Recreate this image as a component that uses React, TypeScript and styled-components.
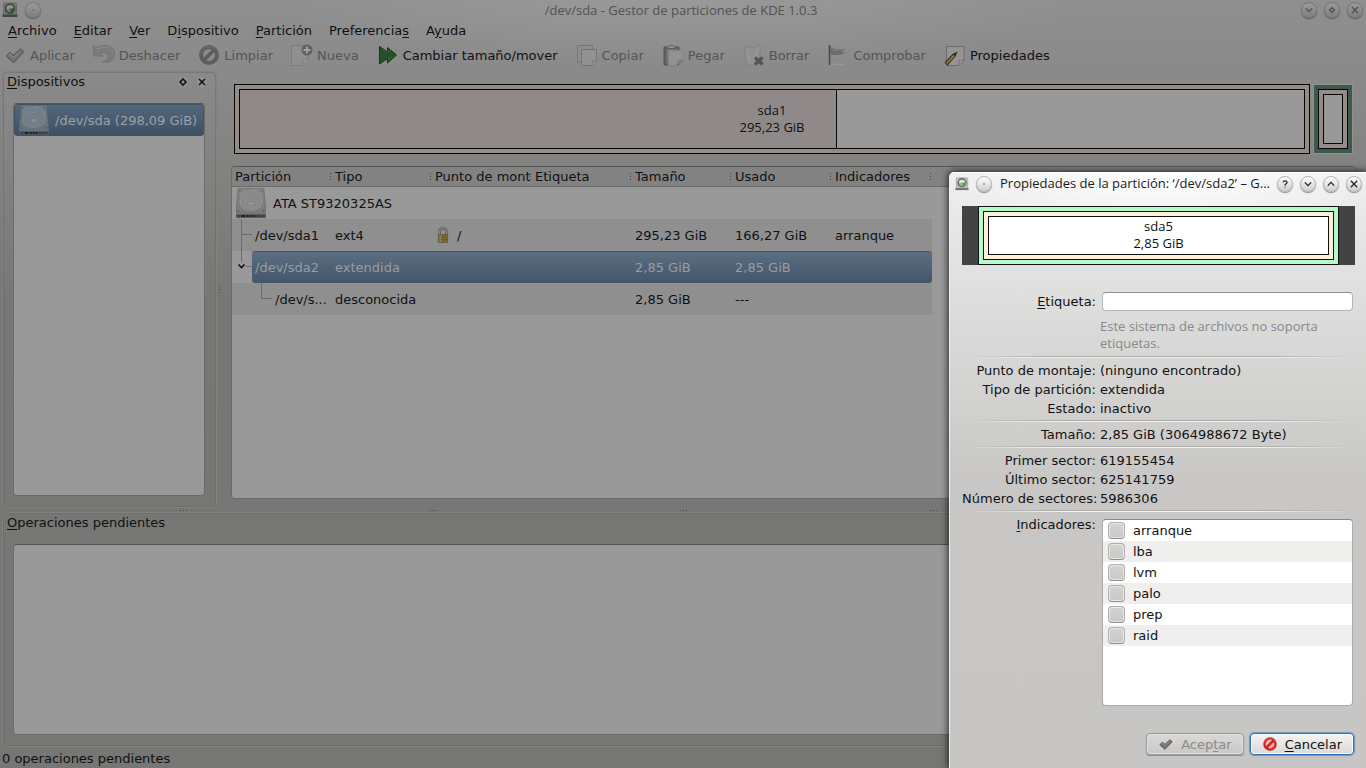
import React from "react";
import styled, { createGlobalStyle, css } from "styled-components";

const GlobalStyle = createGlobalStyle`
  * { box-sizing: border-box; }
  html, body { margin: 0; padding: 0; }
  body {
    font-family: "DejaVu Sans", sans-serif;
    font-size: 13px;
    line-height: 19px;
    color: #111;
    overflow: hidden;
  }
  button, input { font: inherit; color: inherit; }
  u { text-decoration: underline; text-underline-offset: 2px; text-decoration-thickness: 1px; }
`;

const Window = styled.div`
  position: relative;
  display: flex;
  flex-direction: column;
  min-height: 100vh;
  background:
    radial-gradient(ellipse 420px 64px at 50% 0, rgba(160, 160, 160, 0.6), transparent),
    linear-gradient(#8f8f8f 0, #8a8a8a 70px, #838382 160px, #777775 300px, #767674 100%);
`;

const TitleBar = styled.header<{ $dialog?: boolean }>`
  display: flex;
  align-items: center;
  gap: 7px;
  height: ${(p) => (p.$dialog ? 21 : 20)}px;
  padding: ${(p) => (p.$dialog ? "0 4px 0 5px" : "0 3px 0 2px")};
  flex: none;
`;

const Title = styled.h1<{ $dialog?: boolean }>`
  flex: 1;
  margin: 0;
  padding-left: ${(p) => (p.$dialog ? 1 : 20)}px;
  font: 400 13px/19px "Open Sans", sans-serif;
  text-align: ${(p) => (p.$dialog ? "left" : "center")};
  color: ${(p) => (p.$dialog ? "#1a1a1a" : "#525252")};
  white-space: nowrap;
`;

const RoundButton = styled.button<{ $dialog?: boolean }>`
  display: grid;
  place-items: center;
  flex: none;
  width: 16px;
  height: 16px;
  padding: 0;
  border: 1px solid ${(p) => (p.$dialog ? "#b5b5b5" : "#777")};
  border-radius: 50%;
  background: ${(p) =>
    p.$dialog ? "linear-gradient(#fdfdfd, #cfcfcf)" : "linear-gradient(#9a9a9a, #808080)"};
  box-shadow: 0 1px 1px ${(p) => (p.$dialog ? "#888" : "#555")};
  color: ${(p) => (p.$dialog ? "#222" : "#505050")};
  svg { width: 8px; height: 8px; }
`;

const MenuBar = styled.nav`
  display: flex;
  gap: 17px;
  height: 20px;
  padding: 0 8px;
  flex: none;
`;

const MenuItem = styled.button`
  padding: 0;
  border: 0;
  background: none;
  line-height: 19px;
`;

const ToolBar = styled.div`
  display: flex;
  gap: 18px;
  height: 31px;
  padding: 0 4px 1px;
  flex: none;
`;

const ToolButton = styled.button`
  display: flex;
  align-items: center;
  gap: 4px;
  padding: 0;
  border: 0;
  background: none;
  white-space: nowrap;
  color: #111;
  &:disabled { color: #545454; }
`;

const Workspace = styled.main`
  display: flex;
  flex: 1;
  min-height: 0;
`;

const dockFrame = css`
  border: 1px solid #828280;
  border-radius: 5px;
  box-shadow: inset 0 0 0 1px rgba(100, 100, 98, 0.45);
`;

const Dock = styled.section`
  ${dockFrame}
  display: flex;
  flex-direction: column;
  width: 215px;
  margin-left: 2px;
  padding: 0 11px 11px 10px;
  flex: none;
`;

const DockHeader = styled.div`
  display: flex;
  align-items: center;
  gap: 9px;
  height: 19px;
  margin: 0 -2px 12px -6px;
`;

const DockTitle = styled.h2`
  flex: 1;
  margin: 0;
  font-size: 13px;
  font-weight: 400;
`;

const DockButton = styled.button`
  display: grid;
  place-items: center;
  width: 10px;
  height: 10px;
  padding: 0;
  border: 0;
  border-radius: 50%;
  background: #949494;
`;

const sunken = css`
  border: 1px solid #6b6b6a;
  border-top-color: #555554;
  border-radius: 4px;
  background: #999;
`;

const DeviceList = styled.ul`
  ${sunken}
  flex: 1;
  margin: 0;
  padding: 0;
  list-style: none;
`;

const DeviceItem = styled.li`
  display: flex;
  align-items: center;
  gap: 6px;
  height: 32px;
  padding-left: 4px;
  border: 1px solid #3f5266;
  border-radius: 3px;
  background: linear-gradient(#52677c, #3f5064);
  color: #9ba1a8;
  white-space: nowrap;
`;

const Dots = styled.div<{ $vertical?: boolean }>`
  flex: none;
  width: ${(p) => (p.$vertical ? 1 : 7)}px;
  height: ${(p) => (p.$vertical ? 7 : 1)}px;
  background: repeating-linear-gradient(
    ${(p) => (p.$vertical ? "180deg" : "90deg")},
    #484847 0 1px,
    transparent 1px 3px
  );
`;

const VerticalSplitter = styled.div`
  display: flex;
  align-items: center;
  justify-content: center;
  width: 4px;
`;

const HorizontalSplitter = styled.div`
  display: flex;
  align-items: center;
  gap: 243px;
  height: 4px;
  padding-left: 180px;
  overflow: hidden;
  flex: none;
`;

const Content = styled.div`
  display: flex;
  flex-direction: column;
  gap: 12px;
  flex: 1;
  min-width: 0;
  padding: 13px 10px 9px;
`;

const DeviceBar = styled.div`
  display: flex;
  gap: 3px;
  height: 70px;
  margin: 0 3px;
`;

const PartitionFrame = styled.div`
  flex: 1;
  padding: 4px;
  border: 1px solid #050505;
  background: #938c87;
`;

const PartitionFill = styled.div<{ $used?: number }>`
  display: grid;
  place-content: center;
  height: 100%;
  border: 1px solid #050505;
  background: ${(p) =>
    p.$used
      ? `linear-gradient(90deg, #8f8a89 ${p.$used}%, #050505 ${p.$used}%, #050505 calc(${p.$used}% + 1px), #999 calc(${p.$used}% + 1px))`
      : "#999"};
  font: 13px/17px "Open Sans", sans-serif;
  text-align: center;
`;

const ExtendedFrame = styled.div`
  width: 40px;
  padding: 4px;
  border: 1px solid #8f9291;
  background: #3f584f;
  > div { height: 100%; }
`;

const TreeView = styled.div`
  ${sunken}
  flex: 1;
  overflow: hidden;
`;

const TreeTable = styled.table`
  width: 100%;
  table-layout: fixed;
  border-collapse: separate;
  border-spacing: 0;
  th, td {
    padding: 0 0 0 3px;
    font-weight: 400;
    text-align: left;
    white-space: nowrap;
    overflow: hidden;
  }
  col { width: 100px; }
  col:last-child { width: auto; }
`;

const HeadCell = styled.th`
  height: 20px;
  background: #828282;
  border-bottom: 1px solid #6a6a6a;
  > div {
    display: flex;
    justify-content: space-between;
    align-items: center;
    padding-right: 1px;
  }
  span { min-width: 0; overflow: hidden; }
`;

const Row = styled.tr<{ $alt?: boolean; $selected?: boolean }>`
  td {
    height: 32px;
    background: ${(p) => (p.$alt ? "#8f8f8f" : "#999")};
  }
  td.rest { background: #999; }
  ${(p) =>
    p.$selected &&
    css`
      color: #989da3;
      td:not(:first-child):not(.rest) {
        background: linear-gradient(#5c6e80, #43566a);
        border-top: 1px solid #3f546b;
      }
      td:nth-child(7) { border-radius: 0 3px 3px 0; }
    `}
  td:first-child { padding: 0; }
`;

const TreeCell = styled.div<{ $selected?: boolean }>`
  display: flex;
  align-items: center;
  height: 32px;
  svg { flex: none; }
  span {
    flex: 1;
    height: 32px;
    padding-left: 3px;
    line-height: 33px;
    overflow: hidden;
    ${(p) =>
      p.$selected &&
      css`
        line-height: 31px;
        background: linear-gradient(#5c6e80, #43566a);
        border-top: 1px solid #3f546b;
        border-radius: 3px 0 0 3px;
      `}
  }
`;

const DiskCell = styled.div`
  display: flex;
  align-items: center;
  gap: 7px;
  height: 32px;
  padding-left: 4px;
`;

const MountCell = styled.div`
  display: flex;
  align-items: center;
  gap: 6px;
`;

const Operations = styled.section`
  ${dockFrame}
  display: flex;
  flex-direction: column;
  height: 235px;
  margin: 0 2px;
  padding: 0 10px 11px;
  flex: none;
  h2 { margin-left: -6px; flex: none; }
`;

const OperationsList = styled.div`
  ${sunken}
  flex: 1;
  margin-top: 12px;
`;

const StatusBar = styled.footer`
  height: 21px;
  padding: 2px 2px 0;
  flex: none;
`;

/* The properties window floats over the main window. */
const Dialog = styled.section`
  position: absolute;
  top: 172px;
  right: 0;
  bottom: 0;
  display: flex;
  flex-direction: column;
  width: 417px;
  border-left: 1px solid #eee;
  border-top: 1px solid #fff;
  border-radius: 5px 0 0 0;
  background:
    radial-gradient(ellipse 230px 64px at 50% 0, #fff, rgba(255, 255, 255, 0)),
    linear-gradient(#efefef 0, #e6e6e6 60px, #c8c7c5 310px, #c7c6c4 100%);
  box-shadow: 0 0 7px 1px rgba(0, 0, 0, 0.75);
`;

const DialogBody = styled.form`
  display: flex;
  flex-direction: column;
  flex: 1;
  padding: 12px 11px 13px 12px;
`;

const Preview = styled.div`
  height: 59px;
  margin-bottom: 27px;
  padding: 0 16px;
  background: #434343;
`;

const PreviewFrame = styled.div<{ $color: string }>`
  height: 100%;
  padding: 4px;
  border: 1px solid #111;
  background: ${(p) => p.$color};
`;

const PreviewFill = styled.div`
  display: grid;
  place-content: center;
  height: 100%;
  padding-bottom: 1px;
  border: 1px solid #111;
  background: #fff;
  font: 13px/17px "Open Sans", sans-serif;
  text-align: center;
`;

const Fields = styled.div`
  display: grid;
  grid-template-columns: 134px 1fr;
  column-gap: 4px;
`;

const FieldLabel = styled.label`
  text-align: right;
  white-space: nowrap;
`;

const TextBox = styled.input`
  height: 19px;
  margin: 0 2px;
  padding: 0 4px;
  border: 1px solid #b7b6b4;
  border-top-color: #8f8f8e;
  border-radius: 4px;
  background: #fff;
  min-width: 0;
  outline: none;
`;

const Hint = styled.p`
  grid-column: 2;
  margin: 7px 0 2px;
  font: 13px/17px "Open Sans", sans-serif;
  color: #888;
`;

const Separator = styled.hr`
  grid-column: 1 / -1;
  width: 100%;
  height: 2px;
  margin: 2px 0 3px;
  border: 0;
  background:
    linear-gradient(90deg, transparent, #aaa9a7 25%, #aaa9a7 75%, transparent) 0 0 / 100% 1px no-repeat,
    linear-gradient(90deg, transparent, #f4f4f3 25%, #f4f4f3 75%, transparent) 0 1px / 100% 1px no-repeat;
`;

const FlagList = styled.ul`
  height: 187px;
  margin: 4px 2px 0;
  padding: 0;
  border: 1px solid #acaba9;
  border-top-color: #888;
  border-radius: 4px;
  background: #fff;
  list-style: none;
  overflow: hidden;
`;

const Flag = styled.li`
  height: 21px;
  &:nth-child(even) { background: #efefee; }
  label {
    display: flex;
    align-items: center;
    gap: 8px;
    height: 21px;
    padding-left: 5px;
  }
`;

const CheckBox = styled.input`
  appearance: none;
  width: 17px;
  height: 17px;
  margin: 0;
  border: 1px solid #b0afad;
  border-bottom-color: #8c8c8c;
  border-radius: 4px;
  background: linear-gradient(#d5d4d2, #c8c7c5);
  box-shadow: inset 0 0 0 1px #e8e8e7;
`;

const Actions = styled.div`
  display: flex;
  justify-content: flex-end;
  gap: 6px;
  margin: auto 1px 0 0;
`;

const ActionButton = styled.button<{ $focused?: boolean }>`
  display: flex;
  align-items: center;
  gap: 7px;
  height: 22px;
  padding: 0 11px;
  border: 1px solid ${(p) => (p.$focused ? "#2f6fb5" : "#999")};
  border-radius: 4px;
  background: linear-gradient(#f3f3f2, #dad9d7);
  box-shadow: ${(p) =>
    p.$focused ? "0 0 1px 1px #6d9acb, inset 0 0 0 1px #fff" : "inset 0 0 0 1px #e2e2e1, 0 1px 1px #8b8b8a"};
  &:disabled {
    background: linear-gradient(#dad9d7, #c9c8c6);
    color: #8a8a89;
  }
`;

const Glyph = ({ kind }: { kind: string }) => {
  const d: Record<string, string> = {
    down: "M1 3L5 7L9 3",
    up: "M1 7L5 3L9 7",
    close: "M1 1L9 9M9 1L1 9",
    diamond: "M5 2L8 5L5 8L2 5Z",
    help: "M2.500 3C3 0.500 7.500 0.500 7.500 3C7.500 5 5 4.500 5 7M5 8.300V9.500",
    dot: "M4.500 5H5.500",
  };
  return (
    <svg width="10" height="10" viewBox="0 0 10 10" fill="none" stroke="currentColor" strokeWidth="1.6">
      <path d={d[kind]} />
    </svg>
  );
};

const AppIcon = ({ dim }: { dim?: boolean }) => (
  <svg width="16" height="16" viewBox="0 0 16 16">
    <rect x="1.500" y="1" width="13" height="12" rx="1" fill={dim ? "#777" : "#c4c4c4"} stroke={dim ? "#606060" : "#999"} strokeWidth=".7" />
    <path d="M0.500 12.500H15.500V15H0.500Z" fill={dim ? "#454545" : "#777"} />
    <circle cx="8" cy="6.500" r="4.500" fill={dim ? "#7b7b7b" : "#b0b0b0"} stroke={dim ? "#404040" : "#6a6a6a"} strokeWidth="1.500" />
    <path d="M4.500 5Q8 2 11.500 5L10.500 7Q8 5.500 5.500 7Z" fill={dim ? "#959595" : "#e4e4e4"} />
    <path d="M7.500 7.500L12.500 5.500Q13.500 9 10 11Z" fill={dim ? "#275f2d" : "#35bf3c"} />
  </svg>
);

const DiskIcon = ({ blue }: { blue?: boolean }) => (
  <svg width="30" height="30" viewBox="0 0 30 30">
    <defs>
      <linearGradient id={blue ? "diskB" : "diskG"} x1="0" y1="0" x2="0" y2="1">
        <stop offset="0" stopColor={blue ? "#6b7781" : "#838383"} />
        <stop offset="1" stopColor={blue ? "#66717b" : "#767676"} />
      </linearGradient>
    </defs>
    <path d="M2 1Q2 0 3 0H27Q28 0 28 1L30 25V29Q30 30 29 30H1Q0 30 0 29V25Z" fill={`url(#${blue ? "diskB" : "diskG"})`} stroke={blue ? "#515c66" : "#646464"} strokeWidth=".6" />
    <path d="M0.500 26.500H29.500V29.500H0.500Z" fill={blue ? "#3c4650" : "#444"} />
    <path d="M6 28H9M11 28H12.500M14 28H15.500M17 28H18.500" stroke="#1e1e1e" strokeWidth="2" />
    <path d="M17 1.500C26 3 27 10 26 16C24 24 6 25 4 16C3 11 8 10 13 8C16 6 14 2 17 1.500Z" fill={blue ? "#727e88" : "#8a8a8a"} stroke={blue ? "#87929b" : "#9c9c9c"} strokeWidth=".7" />
    <path d="M4 12V3Q4 2 5 2H15Q14 6 11 8Q6 9 4 12Z" fill={blue ? "#75808a" : "#8b8b8b"} />
    <ellipse cx="15" cy="15.500" rx="9" ry="6.500" fill="none" stroke={blue ? "#6d7882" : "#848484"} strokeWidth=".7" />
    <ellipse cx="15" cy="15.500" rx="3.400" ry="2" fill={blue ? "#85909a" : "#969696"} stroke={blue ? "#66717b" : "#7a7a7a"} strokeWidth=".7" />
    <circle cx="4" cy="3" r=".7" fill="#555" /><circle cx="26" cy="3" r=".7" fill="#555" />
    <circle cx="2.500" cy="23" r=".7" fill="#4a4a4a" /><circle cx="27.500" cy="23" r=".7" fill="#4a4a4a" />
  </svg>
);

const LockIcon = () => (
  <svg width="16" height="16" viewBox="0 0 16 16">
    <path d="M4.500 8V4.500Q4.500 1.500 8 1.500T11.500 4.500V8" fill="none" stroke="#555" strokeWidth="2.400" />
    <path d="M4.500 8V4.500Q4.500 1.500 8 1.500T11.500 4.500V8" fill="none" stroke="#8d8d8d" strokeWidth="1.200" />
    <rect x="3.300" y="7.500" width="9.400" height="8" rx=".6" fill="#77672f" stroke="#5d5228" strokeWidth=".6" />
    <path d="M5.500 8V15" stroke="#948550" strokeWidth="2" />
    <path d="M3.500 10H12.500M3.500 12.500H12.500" stroke="#665923" strokeWidth=".5" />
  </svg>
);

const Check = ({ size }: { size: number }) => (
  <svg width={size} height={size} viewBox="0 0 22 22">
    <path d="M2.500 12L6 8.500L9.500 11.500L16.500 5L19.500 8L9.500 18.500Z" fill="#747474" stroke="#606060" strokeWidth="1.300" strokeLinejoin="round" />
    <path d="M4.500 11.500L6 10L9.500 13.500L16.500 7" fill="none" stroke="#8f8f8f" strokeWidth="1" />
  </svg>
);

const tools: { label: string; enabled?: boolean; icon: React.ReactNode }[] = [
  { label: "Aplicar", icon: <Check size={22} /> },
  {
    label: "Deshacer",
    icon: (
      <>
        <path d="M.5 1.500L3.500 3.500Q9 .5 14 1.500Q21.500 3.500 21.500 10.500Q21 16.500 16 18H9.500Q15.500 16 15.500 12.500Q15 9 11 8.500Q9 8.500 7.500 9.500L10.500 12H.5Z" fill="#7b7b7b" stroke="#6f6f6f" strokeWidth=".8" />
        <path d="M1.500 3L4 5Q9 2 14 3Q19.500 4.500 20 10" fill="none" stroke="#8e8e8e" />
      </>
    ),
  },
  {
    label: "Limpiar",
    icon: (
      <>
        <circle cx="11" cy="11" r="8" fill="none" stroke="#5d5d5d" strokeWidth="4" />
        <path d="M5.500 16.500L16.500 5.500" stroke="#5d5d5d" strokeWidth="3.600" />
        <path d="M3 10Q3.500 3.500 11 3Q15 3 17 5" fill="none" stroke="#707070" strokeWidth="1" />
      </>
    ),
  },
  {
    label: "Nueva",
    icon: (
      <>
        <path d="M.5 1.500H17.500V14L11 21.500H.5Z" fill="#8f8f8f" stroke="#777" strokeWidth=".8" />
        <path d="M11 21.500Q13 19 12 15.500Q15 16.500 17.500 14" fill="#9b9b9b" stroke="#777" strokeWidth=".8" />
        <circle cx="16" cy="6" r="5.500" fill="#616161" />
        <path d="M16 2.500V9.500M12.500 6H19.500" stroke="#a0a0a0" strokeWidth="2" />
      </>
    ),
  },
  {
    label: "Cambiar tamaño/mover",
    enabled: true,
    icon: (
      <>
        <path d="M2.500 2.500L10.500 8V3.500L19.500 11L10.500 19V14.500L2.500 20Z" fill="#24502a" stroke="#18351b" strokeWidth="1" strokeLinejoin="round" />
        <path d="M3.500 4.500L11 10V5.500L17 10.500Z" fill="#35543a" />
        <path d="M11.500 13.500V16.500L17 12Z" fill="#27702f" />
      </>
    ),
  },
  {
    label: "Copiar",
    icon: (
      <>
        <path d="M1.500 1.500H16.500V18H1.500Z" fill="#8e8e8e" stroke="#707070" strokeWidth=".8" />
        <path d="M5.500 5.500H20.500V17L16 21.500H5.500Z" fill="#929292" stroke="#707070" strokeWidth=".9" />
        <path d="M16 21.500Q17 19.500 16 17Q18.500 18 20.500 17" fill="#9b9b9b" stroke="#707070" strokeWidth=".8" />
      </>
    ),
  },
  {
    label: "Pegar",
    icon: (
      <>
        <path d="M2 3H17V21H2Z" fill="#626262" stroke="#565656" />
        <path d="M4.500 4H15V19H4.500Z" fill="#777" />
        <path d="M5 4.500Q6 1.500 9.500 1.500T14 4.500Z" fill="#929292" stroke="#555" strokeWidth=".8" />
        <path d="M6.500 6.500H21V16.500L16 21.500H6.500Z" fill="#929292" stroke="#828282" strokeWidth=".7" />
        <path d="M15.500 21Q17 19 16 17Q18.500 17.500 20.500 16.500Z" fill="#a0a0a0" stroke="#555" strokeWidth=".7" />
      </>
    ),
  },
  {
    label: "Borrar",
    icon: (
      <>
        <path d="M1.500 3Q5 1 7 3.500Q11 5 13.500 1.500Q18 1 17.500 5L16 20Q9 22.500 3.500 20Q1 12 1.500 3Z" fill="#919191" stroke="#7c7c7c" strokeWidth=".8" />
        <path d="M5 7L6.500 18M14 6L12.500 15" stroke="#9a9a9a" />
        <path d="M12 13.500L19.500 20.500M19.500 13.500L12 20.500" stroke="#555" strokeWidth="3.500" />
      </>
    ),
  },
  {
    label: "Comprobar",
    icon: (
      <>
        <path d="M3.500 21Q12 17.500 19 21Z" fill="#989898" />
        <path d="M3.500 3Q9 6.500 19 5L14.500 7.500L18.500 9Q12 12 3.500 10.500Z" fill="#6c6c6c" />
        <path d="M4 4Q9 6.500 17 5.500L7 7.500Z" fill="#7e7e7e" />
        <path d="M2.500 1V21" stroke="#484848" strokeWidth="1.500" />
      </>
    ),
  },
  {
    label: "Propiedades",
    enabled: true,
    icon: (
      <>
        <path d="M2.500 2.500H20V16L15 21.500H2.500Z" fill="#949494" stroke="#666" strokeWidth=".9" />
        <path d="M14.500 21.500Q16 19 14.500 16.500Q18 17.500 20 15.500" fill="#a0a0a0" stroke="#6c6c6c" strokeWidth=".8" />
        <path d="M.5 18.500L3.500 21.500L11.500 12.500L13.500 7.500L8.500 10Z" fill="#2e2a20" />
        <path d="M2.500 19.500L10 11.500" stroke="#8f7a42" strokeWidth="2" />
      </>
    ),
  },
];

const CancelIcon = () => (
  <svg width="16" height="16" viewBox="0 0 16 16">
    <circle cx="8" cy="8" r="5.600" fill="#f4b5b0" stroke="#cc2722" strokeWidth="2.400" />
    <path d="M4 12L12 4" stroke="#cc2722" strokeWidth="2.600" />
    <path d="M2 6Q4 1.500 8 1.500T14 6" fill="none" stroke="#ea7068" strokeWidth=".8" />
  </svg>
);

const Branch = ({ kind }: { kind: "tee" | "open" | "leaf" }) => (
  <svg width={kind === "leaf" ? 40 : 20} height="32" fill="none" stroke="#6b6b6b">
    {kind === "tee" && <path d="M9.500 0V32M9.500 15.500H20" />}
    {kind === "open" && (
      <>
        <path d="M9.500 0V11M14 15.500H20" />
        <path d="M6.500 13.500L9.500 16.500L12.500 13.500" stroke="#111" strokeWidth="1.600" />
      </>
    )}
    {kind === "leaf" && <path d="M29.500 0V15.500H40" />}
  </svg>
);

const menus: [string, string, string][] = [
  ["", "A", "rchivo"],
  ["", "E", "ditar"],
  ["", "V", "er"],
  ["D", "i", "spositivo"],
  ["", "P", "artición"],
  ["Preferencia", "s", ""],
  ["A", "y", "uda"],
];

const columns = ["Partición", "Tipo", "Punto de mont", "Etiqueta", "Tamaño", "Usado", "Indicadores"];

const firstFields = [
  ["Punto de montaje:", "(ninguno encontrado)"],
  ["Tipo de partición:", "extendida"],
  ["Estado:", "inactivo"],
];
const sectorFields = [
  ["Primer sector:", "619155454"],
  ["Último sector:", "625141759"],
  ["Número de sectores:", "5986306"],
];

const FieldRows = ({ rows }: { rows: string[][] }) => (
  <>
    {rows.map(([name, value]) => (
      <React.Fragment key={name}>
        <FieldLabel as="span">{name}</FieldLabel>
        <span>{value}</span>
      </React.Fragment>
    ))}
  </>
);

export default function App() {
  return (
    <Window>
      <GlobalStyle />
      <TitleBar>
        <AppIcon dim />
        <RoundButton aria-label="Menú"><Glyph kind="dot" /></RoundButton>
        <Title>/dev/sda - Gestor de particiones de KDE 1.0.3</Title>
        <RoundButton aria-label="Minimizar"><Glyph kind="down" /></RoundButton>
        <RoundButton aria-label="Maximizar"><Glyph kind="diamond" /></RoundButton>
        <RoundButton aria-label="Cerrar"><Glyph kind="close" /></RoundButton>
      </TitleBar>
      <MenuBar>
        {menus.map(([before, key, after]) => (
          <MenuItem key={before + key + after}>{before}<u>{key}</u>{after}</MenuItem>
        ))}
      </MenuBar>
      <ToolBar>
        {tools.map((t) => (
          <ToolButton key={t.label} disabled={!t.enabled}>
            <svg width="22" height="22" viewBox="0 0 22 22" fill="none">{t.icon}</svg>
            {t.label}
          </ToolButton>
        ))}
      </ToolBar>
      <Workspace>
        <Dock>
          <DockHeader>
            <DockTitle><u>D</u>ispositivos</DockTitle>
            <DockButton aria-label="Desacoplar"><Glyph kind="diamond" /></DockButton>
            <DockButton aria-label="Cerrar panel">
              <svg width="10" height="10" stroke="#111" strokeWidth="1.500"><path d="M2 2L8 8M8 2L2 8" /></svg>
            </DockButton>
          </DockHeader>
          <DeviceList>
            <DeviceItem><DiskIcon blue />/dev/sda (298,09 GiB)</DeviceItem>
          </DeviceList>
        </Dock>
        <VerticalSplitter><Dots $vertical /></VerticalSplitter>
        <Content>
          <DeviceBar>
            <PartitionFrame>
              <PartitionFill $used={56}>
                <div>sda1</div>
                <div>295,23 GiB</div>
              </PartitionFill>
            </PartitionFrame>
            <ExtendedFrame>
              <PartitionFrame><PartitionFill /></PartitionFrame>
            </ExtendedFrame>
          </DeviceBar>
          <TreeView>
            <TreeTable>
              <colgroup>
                {columns.map((c) => <col key={c} />)}
                <col />
              </colgroup>
              <thead>
                <tr>
                  {columns.map((c) => (
                    <HeadCell key={c}>
                      <div><span>{c}</span><Dots $vertical /></div>
                    </HeadCell>
                  ))}
                  <HeadCell />
                </tr>
              </thead>
              <tbody>
                <Row>
                  <td colSpan={7}><DiskCell><DiskIcon />ATA ST9320325AS</DiskCell></td>
                  <td className="rest" />
                </Row>
                <Row $alt>
                  <td><TreeCell><Branch kind="tee" /><span>/dev/sda1</span></TreeCell></td>
                  <td>ext4</td>
                  <td><MountCell><LockIcon />/</MountCell></td>
                  <td />
                  <td>295,23 GiB</td>
                  <td>166,27 GiB</td>
                  <td>arranque</td>
                  <td className="rest" />
                </Row>
                <Row $selected>
                  <td><TreeCell $selected><Branch kind="open" /><span>/dev/sda2</span></TreeCell></td>
                  <td>extendida</td>
                  <td />
                  <td />
                  <td>2,85 GiB</td>
                  <td>2,85 GiB</td>
                  <td />
                  <td className="rest" />
                </Row>
                <Row $alt>
                  <td><TreeCell><Branch kind="leaf" /><span>/dev/s...</span></TreeCell></td>
                  <td>desconocida</td>
                  <td />
                  <td />
                  <td>2,85 GiB</td>
                  <td>---</td>
                  <td />
                  <td className="rest" />
                </Row>
              </tbody>
            </TreeTable>
          </TreeView>
        </Content>
      </Workspace>
      <HorizontalSplitter>
        <Dots /><Dots /><Dots /><Dots /><Dots />
      </HorizontalSplitter>
      <Operations>
        <DockTitle><u>O</u>peraciones pendientes</DockTitle>
        <OperationsList />
      </Operations>
      <StatusBar>0 operaciones pendientes</StatusBar>

      <Dialog role="dialog" aria-label="Propiedades de la partición">
        <TitleBar $dialog>
          <AppIcon />
          <RoundButton $dialog aria-label="Menú"><Glyph kind="dot" /></RoundButton>
          <Title $dialog>Propiedades de la partición: ‘/dev/sda2’ – G...</Title>
          <RoundButton $dialog aria-label="Ayuda"><Glyph kind="help" /></RoundButton>
          <RoundButton $dialog aria-label="Minimizar"><Glyph kind="down" /></RoundButton>
          <RoundButton $dialog aria-label="Maximizar"><Glyph kind="up" /></RoundButton>
          <RoundButton $dialog aria-label="Cerrar"><Glyph kind="close" /></RoundButton>
        </TitleBar>
        <DialogBody onSubmit={(e) => e.preventDefault()}>
          <Preview>
            <PreviewFrame $color="#b5fbc9">
              <PreviewFrame $color="#ffefdb">
                <PreviewFill>
                  <div>sda5</div>
                  <div>2,85 GiB</div>
                </PreviewFill>
              </PreviewFrame>
            </PreviewFrame>
          </Preview>
          <Fields>
            <FieldLabel htmlFor="label"><u>E</u>tiqueta:</FieldLabel>
            <TextBox id="label" readOnly />
            <Hint>Este sistema de archivos no soporta etiquetas.</Hint>
            <Separator />
            <FieldRows rows={firstFields} />
            <Separator />
            <FieldRows rows={[["Tamaño:", "2,85 GiB (3064988672 Byte)"]]} />
            <Separator />
            <FieldRows rows={sectorFields} />
            <Separator />
            <FieldLabel as="span"><u>I</u>ndicadores:</FieldLabel>
            <FlagList>
              {["arranque", "lba", "lvm", "palo", "prep", "raid"].map((f) => (
                <Flag key={f}><label><CheckBox type="checkbox" />{f}</label></Flag>
              ))}
            </FlagList>
          </Fields>
          <Actions>
            <ActionButton type="button" disabled><Check size={16} /><span>Acep<u>t</u>ar</span></ActionButton>
            <ActionButton type="button" $focused><CancelIcon /><span><u>C</u>ancelar</span></ActionButton>
          </Actions>
        </DialogBody>
      </Dialog>
    </Window>
  );
}
